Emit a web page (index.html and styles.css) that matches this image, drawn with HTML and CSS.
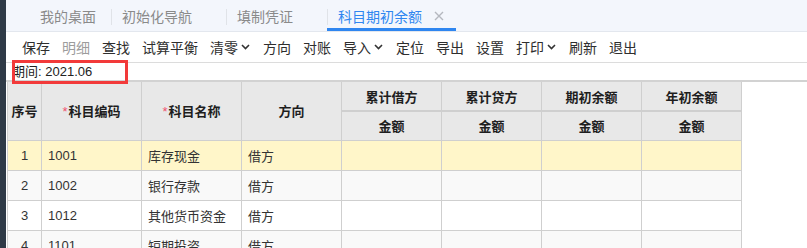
FILE: index.html
```html
<!DOCTYPE html>
<html lang="zh-CN">
<head>
    <meta charset="UTF-8">
    <title>科目期初余额</title>
    <link rel="stylesheet" href="styles.css">
</head>
<body>
<div class="app">
    <div class="side"></div>
    <div class="main">
        <!-- tab strip -->
        <div class="tabs">
            <div class="tab first">我的桌面</div>
            <div class="tab">初始化导航<span class="close hidden"></span></div>
            <div class="tab">填制凭证<span class="close hidden"></span></div>
            <div class="tab active">科目期初余额
                <span class="close">
                    <svg width="10" height="10" viewBox="0 0 10 10"><path d="M1 1L9 9M9 1L1 9" stroke="#b4b8bf" stroke-width="1.4"/></svg>
                </span>
            </div>
        </div>

        <!-- toolbar -->
        <div class="toolbar">
            <span class="btn">保存</span>
            <span class="btn disabled">明细</span>
            <span class="btn">查找</span>
            <span class="btn">试算平衡</span>
            <span class="btn">清零<svg class="caret" width="9" height="6" viewBox="0 0 9 6"><path d="M1 1L4.5 4.5L8 1" fill="none" stroke="#333" stroke-width="1.6"/></svg></span>
            <span class="btn">方向</span>
            <span class="btn">对账</span>
            <span class="btn">导入<svg class="caret" width="9" height="6" viewBox="0 0 9 6"><path d="M1 1L4.5 4.5L8 1" fill="none" stroke="#333" stroke-width="1.6"/></svg></span>
            <span class="btn">定位</span>
            <span class="btn">导出</span>
            <span class="btn">设置</span>
            <span class="btn">打印<svg class="caret" width="9" height="6" viewBox="0 0 9 6"><path d="M1 1L4.5 4.5L8 1" fill="none" stroke="#333" stroke-width="1.6"/></svg></span>
            <span class="btn">刷新</span>
            <span class="btn">退出</span>
        </div>

        <!-- period line, with the red mark drawn over it -->
        <div class="period">
            <span class="period-text">期间: 2021.06</span>
            <span class="mark"></span>
        </div>

        <!-- balance grid -->
        <table class="grid">
            <colgroup>
                <col class="c-no">
                <col class="c-w"><col class="c-w"><col class="c-w">
                <col class="c-w"><col class="c-w"><col class="c-w"><col class="c-w">
            </colgroup>
            <thead>
                <tr class="h1">
                    <th rowspan="2">序号</th>
                    <th rowspan="2"><span class="req">*</span>科目编码</th>
                    <th rowspan="2"><span class="req">*</span>科目名称</th>
                    <th rowspan="2">方向</th>
                    <th>累计借方</th>
                    <th>累计贷方</th>
                    <th>期初余额</th>
                    <th>年初余额</th>
                </tr>
                <tr class="h2">
                    <th>金额</th>
                    <th>金额</th>
                    <th>金额</th>
                    <th>金额</th>
                </tr>
            </thead>
            <tbody>
                <tr class="current">
                    <td class="no">1</td><td>1001</td><td>库存现金</td><td>借方</td>
                    <td></td><td></td><td></td><td></td>
                </tr>
                <tr class="odd">
                    <td class="no">2</td><td>1002</td><td>银行存款</td><td>借方</td>
                    <td></td><td></td><td></td><td></td>
                </tr>
                <tr>
                    <td class="no">3</td><td>1012</td><td>其他货币资金</td><td>借方</td>
                    <td></td><td></td><td></td><td></td>
                </tr>
                <tr class="odd">
                    <td class="no">4</td><td>1101</td><td>短期投资</td><td>借方</td>
                    <td></td><td></td><td></td><td></td>
                </tr>
            </tbody>
        </table>
    </div>
</div>
</body>
</html>
```

FILE: styles.css
```css
body {
    margin: 0;
    font-family: "Liberation Sans", "Noto Sans CJK SC", sans-serif;
    color: #333;
    background-color: #fff;
    overflow: hidden;
}

.app {
    display: flex;
    height: 248px;
}

/* dark edge of the side menu */
.side {
    width: 6px;
    background-color: #2f3a47;
    flex-shrink: 0;
}

.main {
    flex: 1;
    position: relative;
}

/* tab strip */
.tabs {
    display: flex;
    height: 32px;
    padding-left: 23px;
    background-color: #f3f6fc;
    border-bottom: 1px solid #e3e7ee;
    box-sizing: border-box;
}

.tab {
    position: relative;
    display: flex;
    align-items: center;
    padding: 0 12px 0 11px;
    font-size: 14px;
    color: #8a8a8a;
}

.tab + .tab::before {
    content: "";
    position: absolute;
    left: 0;
    top: 9px;
    height: 16px;
    border-left: 1px solid #e0e3e8;
}

.tab.first {
    padding-right: 15px;
}

.tab .close {
    display: inline-flex;
    width: 10px;
    height: 10px;
    margin-left: 12px;
}

.tab.active {
    color: #2f86f0;
}

.tab.active::after {
    content: "";
    position: absolute;
    left: 0;
    right: 0;
    bottom: 0;
    height: 3px;
    background-color: #2f86f0;
}

/* toolbar */
.toolbar {
    display: flex;
    align-items: center;
    gap: 12px;
    height: 30px;
    padding-left: 16px;
    border-bottom: 1px solid #dcdcdc;
    font-size: 14px;
    color: #2e2e2e;
}

.toolbar .btn {
    display: inline-flex;
    align-items: center;
}

.toolbar .disabled {
    color: #9c9c9c;
}

.toolbar .caret {
    margin: 0 1px 0 3px;
}

/* period line */
.period {
    position: relative;
    height: 17px;
    padding-left: 6px;
    font-size: 13px;
    line-height: 18px;
    color: #222;
    border-bottom: 2px solid #d2d2d2;
}

.period .mark {
    position: absolute;
    left: 6px;
    top: -3px;
    width: 110px;
    height: 18px;
    border: 3px solid #f23a3a;
}

/* grid */
.grid {
    margin-left: 1px;
    border-collapse: collapse;
    table-layout: fixed;
    width: 735px;
    font-size: 13px;
}

.grid .c-no {
    width: 34px;
}

.grid .c-w {
    width: 100px;
}

.grid th,
.grid td {
    border: 1px solid #cfcfcf;
    padding: 0 6px;
    white-space: nowrap;
    overflow: hidden;
}

.grid th {
    background-color: #e8e8e8;
    font-weight: bold;
    color: #1e1e1e;
    text-align: center;
    padding: 0;
}

.grid thead tr:first-child th {
    border-top: none;
}

.grid .h1 {
    height: 29px;
}

.grid .h1 th {
    border-bottom-width: 2px;
}

.grid .h1 th[rowspan] {
    border-bottom-width: 1px;
}

.grid .h2 {
    height: 29px;
}

.grid .req {
    color: #f0506e;
    font-weight: normal;
    margin-right: 1px;
}

.grid tbody tr {
    height: 30px;
    background-color: #fff;
}

.grid tbody tr.odd {
    background-color: #f9f9f9;
}

.grid tbody tr.current {
    background-color: #fff6c9;
}

.grid td {
    color: #333;
}

.grid td.no {
    text-align: center;
    padding: 0;
}
```
